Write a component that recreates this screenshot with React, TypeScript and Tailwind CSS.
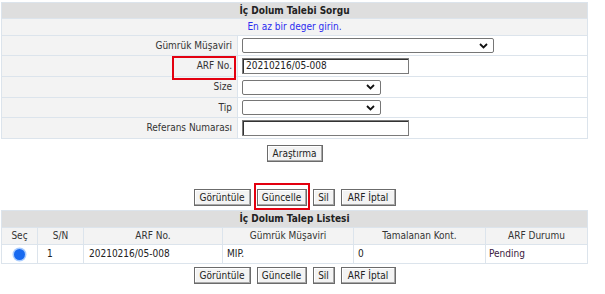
import React from "react";

const F = "font-['DejaVu_Sans_Condensed','DejaVu_Sans',Tahoma,sans-serif] [font-stretch:condensed]";

function Btn({ w, children }: { w: string; children: React.ReactNode }) {
  return (
    <button
      className={`${w} h-[17px] flex items-center justify-center bg-[#f3f3f3] border border-[#6b6b6b] shadow-[inset_-1px_-1px_0_#a8a8a8,inset_1px_1px_0_#ffffff] text-[10px] leading-none text-[#222] ${F}`}
    >
      {children}
    </button>
  );
}

function Chevron() {
  return (
    <svg width="9" height="6" viewBox="0 0 9 6">
      <path d="M1 1 L4.5 4.5 L8 1" fill="none" stroke="#111" strokeWidth="1.8" />
    </svg>
  );
}

function Select({ w }: { w: string }) {
  return (
    <div className={`${w} h-[15px] border border-[#767676] rounded-[2px] bg-white flex items-center justify-end pr-[5px]`}>
      <Chevron />
    </div>
  );
}

function TextBox({ value }: { value?: string }) {
  return (
    <div className="w-[167px] h-[16px] border border-[#7a7a7a] shadow-[inset_1px_1px_0_#333] bg-white flex items-center pl-[3px] text-[10px] leading-none text-[#222]">
      {value}
    </div>
  );
}

function ButtonRow({ highlight }: { highlight?: boolean }) {
  return (
    <div className="flex justify-center gap-[6px] w-[587px] ml-[1px]">
      <Btn w="w-[57px]">Görüntüle</Btn>
      <div className="relative">
        <Btn w="w-[50px]">Güncelle</Btn>
        {highlight && (
          <span className="absolute z-10 -left-[3px] -right-[3px] -top-[6px] -bottom-[4px] border-2 border-[#e3000f]" />
        )}
      </div>
      <Btn w="w-[22px]">Sil</Btn>
      <Btn w="w-[55px]">ARF İptal</Btn>
    </div>
  );
}

const bd = "border border-[#dce4ec]";

export default function App() {
  const rows: { label: string; field: React.ReactNode; h: string; box?: boolean }[] = [
    { label: "Gümrük Müşaviri", field: <Select w="w-[252px]" />, h: "h-[20px]" },
    { label: "ARF No.", field: <TextBox value="20210216/05-008" />, h: "h-[21px]", box: true },
    { label: "Size", field: <Select w="w-[139px]" />, h: "h-[21px]" },
    { label: "Tip", field: <Select w="w-[139px]" />, h: "h-[20px]" },
    { label: "Referans Numarası", field: <TextBox />, h: "h-[21px]" },
  ];

  return (
    <div className={`w-[605px] h-[294px] bg-white text-[10px] text-[#333] overflow-hidden ${F}`}>
      <table className="border-collapse table-fixed w-[587px] ml-[1px] mt-[2px]">
        <colgroup>
          <col className="w-[236px]" />
          <col />
        </colgroup>
        <tbody>
          <tr className="h-[16px]">
            <td colSpan={2} className={`${bd} bg-[#dedede] text-center font-bold text-[#222] leading-none`}>
              İç Dolum Talebi Sorgu
            </td>
          </tr>
          <tr className="h-[17px]">
            <td colSpan={2} className={`${bd} bg-[#f3f3f3] text-center text-[#2b2bf0] leading-none`}>
              En az bir deger girin.
            </td>
          </tr>
          {rows.map((r) => (
            <tr key={r.label} className={r.h}>
              <td className={`${bd} bg-[#f3f3f3] text-right pr-[5px] leading-none relative`}>
                {r.label}
                {r.box && (
                  <span className="absolute z-10 right-[1px] top-0 w-[64px] h-[24px] border-2 border-[#e3000f]" />
                )}
              </td>
              <td className={`${bd} bg-white pl-[4px] py-0`}>{r.field}</td>
            </tr>
          ))}
        </tbody>
      </table>

      <div className="flex justify-center w-[587px] ml-[1px] mt-[6px]">
        <Btn w="w-[56px]">Araştırma</Btn>
      </div>

      <div className="mt-[27px]">
        <ButtonRow highlight />
      </div>

      <table className="border-collapse table-fixed w-[587px] ml-[1px] mt-[4px]">
        <colgroup>
          <col className="w-[36px]" />
          <col className="w-[46px]" />
          <col className="w-[139px]" />
          <col className="w-[131px]" />
          <col className="w-[132px]" />
          <col />
        </colgroup>
        <tbody>
          <tr className="h-[17px]">
            <td colSpan={6} className={`${bd} bg-[#dedede] text-center font-bold text-[#222] leading-none`}>
              İç Dolum Talep Listesi
            </td>
          </tr>
          <tr className="h-[17px] bg-[#f3f3f3] text-center leading-none">
            <td className={bd}>Seç</td>
            <td className={bd}>S/N</td>
            <td className={bd}>ARF No.</td>
            <td className={bd}>Gümrük Müşaviri</td>
            <td className={bd}>Tamalanan Kont.</td>
            <td className={bd}>ARF Durumu</td>
          </tr>
          <tr className="h-[19px] bg-white leading-none text-[#222]">
            <td className={`${bd} text-center`}>
              <span className="inline-block align-middle w-[11px] h-[11px] rounded-full bg-[#1769f0] ring-[1.5px] ring-[#a9ccff]" />
            </td>
            <td className={`${bd} pl-[9px]`}>1</td>
            <td className={`${bd} pl-[5px]`}>20210216/05-008</td>
            <td className={`${bd} pl-[4px]`}>MIP.</td>
            <td className={`${bd} pl-[4px]`}>0</td>
            <td className={`${bd} pl-[3px] text-[#3a2040]`}>Pending</td>
          </tr>
        </tbody>
      </table>

      <div className="mt-[3px]">
        <ButtonRow />
      </div>
    </div>
  );
}
